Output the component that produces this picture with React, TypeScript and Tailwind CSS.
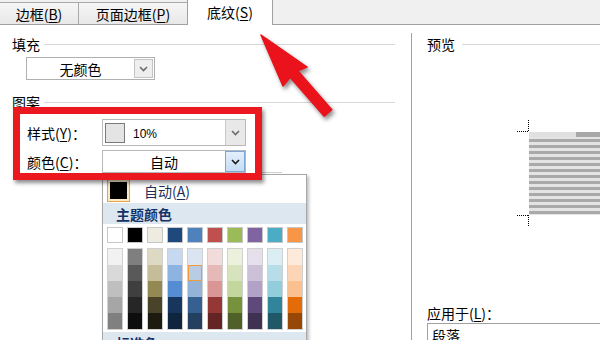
import React from "react";

const FONT = "font-['Noto_Sans_CJK_SC','Noto_Sans',sans-serif]";

function Chevron({ color = "#6b6b6b" }: { color?: string }) {
  return (
    <svg width="9" height="6" viewBox="0 0 9 6">
      <path d="M1 1 L4.5 4.5 L8 1" fill="none" stroke={color} strokeWidth="1.6" />
    </svg>
  );
}

const top = ["#ffffff", "#000000", "#eeece1", "#1f497d", "#4f81bd", "#c0504d", "#9bbb59", "#8064a2", "#4bacc6", "#f79646"];
const shades = [
  ["#f2f2f2", "#d9d9d9", "#bfbfbf", "#a6a6a6", "#808080"],
  ["#7f7f7f", "#595959", "#3f3f3f", "#262626", "#0d0d0d"],
  ["#ddd9c3", "#c4bd97", "#938953", "#494429", "#1d1b10"],
  ["#c6d9f0", "#8db3e2", "#548dd4", "#17365d", "#0f243e"],
  ["#dbe5f1", "#b8cce4", "#95b3d7", "#366092", "#244061"],
  ["#f2dcdb", "#e5b9b7", "#d99694", "#953734", "#632423"],
  ["#ebf1dd", "#d7e3bc", "#c3d69b", "#76923c", "#4f6128"],
  ["#e5e0ec", "#ccc1d9", "#b2a2c7", "#5f497a", "#3f3151"],
  ["#dbeef3", "#b7dde8", "#92cddc", "#31859b", "#205867"],
  ["#fdeada", "#fbd5b5", "#fac08f", "#e36c09", "#974806"],
];

function U({ c }: { c: string }) {
  return <span className="underline underline-offset-2">{c}</span>;
}

export default function App() {
  return (
    <div className={`w-[600px] h-[340px] bg-white relative overflow-hidden text-black ${FONT}`}>
      {/* Tab bar */}
      <div className="h-[25px] bg-[#f0f0f0] border-b border-[#a0a0a0] flex items-end">
        <div className="h-[22px] w-[80px] -ml-px border border-b-0 border-[#a9a9a9] bg-gradient-to-b from-[#f6f6f6] to-[#e8e8e8] flex items-center justify-center text-[14px] leading-none">
          边框(<U c="B" />)
        </div>
        <div className="h-[22px] w-[110px] -ml-px border border-b-0 border-[#a9a9a9] bg-gradient-to-b from-[#f6f6f6] to-[#e8e8e8] flex items-center justify-center text-[14px] leading-none">
          页面边框(<U c="P" />)
        </div>
        <div className="h-[26px] w-[86px] -ml-px -mb-px border border-b-0 border-[#a0a0a0] bg-white flex items-center justify-center text-[14px] leading-none pb-[1px]">
          底纹(<U c="S" />)
        </div>
      </div>

      {/* Body */}
      <div className="flex h-[315px]">
        {/* Left panel */}
        <div className="w-[411px] pl-[12px] pt-[12px] flex flex-col">
          <div className="flex items-center h-[14px] pr-[16px]">
            <span className="text-[14px] leading-none">填充</span>
            <div className="flex-1 h-px bg-[#d8d8d8] ml-[4px]" />
          </div>
          <div className="ml-[14px] mt-[6px] w-[129px] h-[23px] border border-[#b0b0b0] flex items-center">
            <div className="flex-1 text-center text-[14px] leading-none">无颜色</div>
            <div className="w-[19px] h-[19px] mr-[1px] border border-[#c4c4c4] bg-[#eeeeee] flex items-center justify-center">
              <Chevron />
            </div>
          </div>

          <div className="flex items-center h-[14px] pr-[16px] mt-[15px]">
            <span className="text-[14px] leading-none">图案</span>
            <div className="flex-1 h-px bg-[#d8d8d8] ml-[4px]" />
          </div>

          <div className="flex items-center mt-[10px] h-[27px]">
            <div className="ml-[15px] w-[75px] text-[14px] leading-none">
              样式(<U c="Y" />)：
            </div>
            <div className="w-[144px] h-[27px] border border-[#b8b8b8] flex items-center">
              <div className="ml-[2px] w-[20px] h-[20px] bg-[#e4e4e4] border border-[#7a7a7a]" />
              <div className="ml-[8px] flex-1 text-[12px] leading-none font-['Liberation_Sans',sans-serif] pt-[3px]">10%</div>
              <div className="w-[20px] h-[25px] border-l border-[#c8c8c8] bg-[#e8e8e8] flex items-center justify-center">
                <Chevron />
              </div>
            </div>
          </div>

          <div className="flex items-center mt-[4px] h-[23px]">
            <div className="ml-[15px] w-[75px] text-[14px] leading-none">
              颜色(<U c="C" />)：
            </div>
            <div className="w-[144px] h-[23px] border border-[#b8b8b8] flex items-center">
              <div className="flex-1 text-center text-[14px] leading-none">自动</div>
              <div className="w-[20px] h-[21px] border border-[#7ea6d4] bg-gradient-to-b from-[#e3effb] to-[#c6ddf5] flex items-center justify-center">
                <Chevron color="#1a1a1a" />
              </div>
            </div>
            <div className="ml-[16px] mt-[22px] w-[20px] h-px bg-[#d0d0d0]" />
          </div>
        </div>

        {/* Right panel */}
        <div className="flex-1 mt-[8px] border-l border-[#a0a0a0] pl-[15px] pt-[4px] flex flex-col">
          <div className="flex items-center h-[14px]">
            <span className="text-[14px] leading-none">预览</span>
            <div className="flex-1 h-px bg-[#d8d8d8] ml-[7px]" />
          </div>
          <div className="ml-[86px] mt-[69px]">
            <svg width="87" height="107" viewBox="0 0 87 107">
              <path d="M15.5 0 V12 M4 11.5 H16" stroke="#000" strokeWidth="1" strokeDasharray="1 1" fill="none" />
              <rect x="16" y="12" width="71" height="5" fill="#e0e0e0" />
              <rect x="63" y="12" width="24" height="5" fill="#a8a8a8" />
              <rect x="16" y="17" width="71" height="78" fill="#e4e4e4" />
              {Array.from({ length: 13 }).map((_, i) => (
                <rect key={i} x="16" y={19 + i * 6} width="71" height="3" fill="#a9a9a9" />
              ))}
              <path d="M4 95.5 H16 M15.5 95 V107" stroke="#000" strokeWidth="1" strokeDasharray="1 1" fill="none" />
            </svg>
          </div>
          <div className="mt-[79px] h-[14px] flex items-center text-[14px] leading-none">
            应用于(<U c="L" />)：
          </div>
          <div className="mt-[3px] h-[26px] border border-[#a0a0a0] border-r-0 pl-[4px] pt-[4px] text-[14px] leading-none">
            段落
          </div>
        </div>
      </div>

      {/* Color popup */}
      <div className="absolute left-[102px] top-[174px] w-[205px] h-[180px] bg-white border border-[#a7a7a7] shadow-[2px_2px_3px_rgba(0,0,0,0.25)] flex flex-col">
        <div className="h-[28px] flex items-center">
          <div className="ml-[4px] mt-[4px] w-[23px] h-[23px] border border-[#e6a447] bg-[#fbe8c4] p-[2px]">
            <div className="w-full h-full bg-black" />
          </div>
          <span className="ml-[14px] mt-[4px] text-[14px] leading-none text-[#1e2f55]">
            自动(<U c="A" />)
          </span>
        </div>
        <div className="mt-[1px] h-[25px] bg-[#dde7f0] flex items-center pl-[13px] text-[14px] font-bold leading-none text-[#153267]">
          主题颜色
        </div>
        <div className="flex gap-[4px] pl-[4px] mt-[3px]">
          {top.map((c) => (
            <div key={c} className="w-[16px] h-[16px] border border-[#c6c6c6]" style={{ background: c }} />
          ))}
        </div>
        <div className="flex gap-[4px] pl-[4px] mt-[5px]">
          {shades.map((col, ci) => (
            <div key={ci} className="w-[16px] border border-[#d0d0d0] flex flex-col">
              {col.map((c, ri) => (
                <div
                  key={ri}
                  className={ci === 4 && ri === 1 ? "h-[16px] border border-[#f09a3a]" : "h-[16px]"}
                  style={{ background: c }}
                />
              ))}
            </div>
          ))}
        </div>
        <div className="mt-[2px] h-[25px] bg-[#dde7f0] flex items-center pl-[13px] text-[14px] font-bold leading-none text-[#153267]">
          标准色
        </div>
      </div>

      {/* Red highlight box */}
      <div className="absolute left-[13px] top-[107px] w-[249px] h-[73px] border-[7px] border-[#ec1820] shadow-[2px_3px_4px_rgba(0,0,0,0.45)]" />

      {/* Red arrow */}
      <svg
        className="absolute left-[240px] top-[20px] drop-shadow-[2px_3px_2px_rgba(0,0,0,0.45)]"
        width="110"
        height="110"
        viewBox="240 20 110 110"
      >
        <polygon
          points="261,35 307,67 297.8,70.75 331.8,109.75 324.2,116.25 290.2,77.25 283,86"
          fill="#ea121b"
          stroke="#ea121b"
          strokeWidth="1.5"
          strokeLinejoin="round"
        />
      </svg>
    </div>
  );
}
